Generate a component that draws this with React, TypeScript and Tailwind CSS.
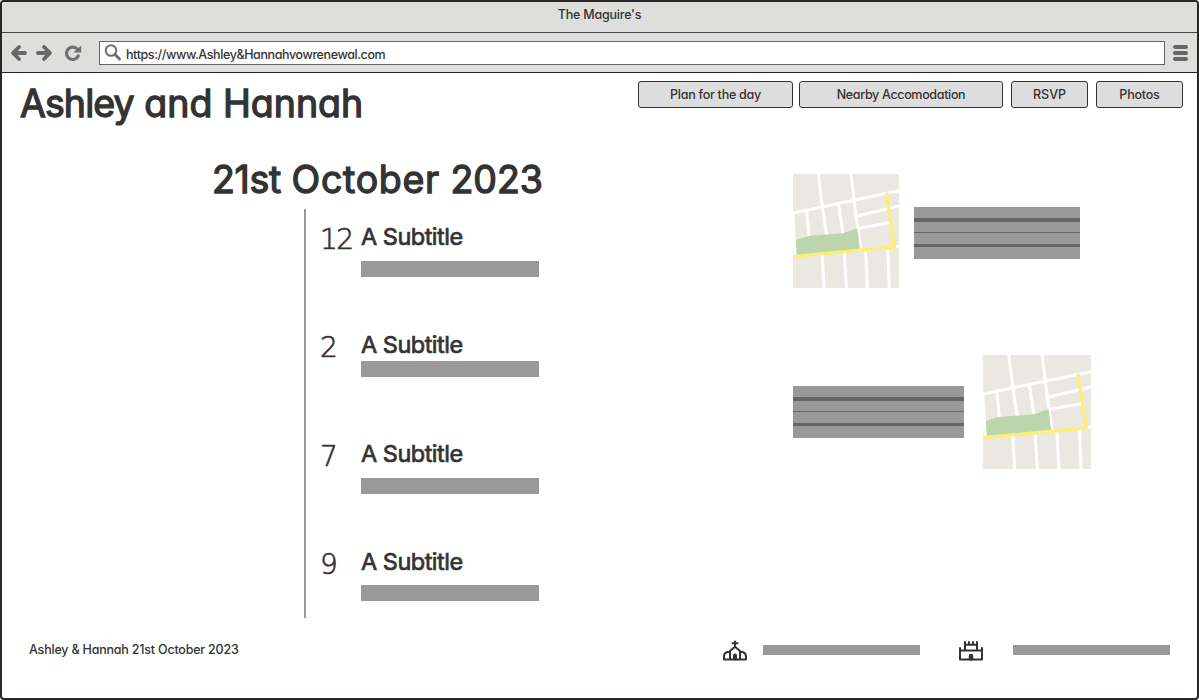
import type { ReactNode } from 'react';

const ink = "font-[Inter,sans-serif] text-[#333] whitespace-nowrap [font-feature-settings:'cv11'] ";
const small = 'text-[12.5px] font-medium ';
const big = 'text-[37.5px] font-normal [-webkit-text-stroke:1.3px_#333] [stroke-linejoin:round] ';

function Text({ className, children }: { className: string; children: ReactNode }) {
  return <span className={ink + className}>{children}</span>;
}

function StreetMap({ className }: { className: string }) {
  return (
    <svg className={className} viewBox="0 0 318 342" preserveAspectRatio="none">
      <rect width="318" height="342" fill="#ebe8e1" />
      <g fill="none" stroke="#fff" strokeWidth="9">
        <path d="M0 117 318 50" />
        <path d="M76 0 88 98 101 185" />
        <path d="M174 0 190 135 204 228" />
        <path d="M41 110 48 187" />
        <path d="M137 93 150 180" />
        <path d="M-1 118 7 248" />
        <path d="M193 126 318 96" />
        <path d="M197 163 290 146" />
        <path d="M88 242 93 342" />
        <path d="M154 238 160 342" />
        <path d="M218 232 223 342" />
        <path d="M284 226 289 342" />
        <path d="M300 220 318 217" />
      </g>
      <path d="M9 198 45 186 150 178 193 163 201 226 11 243Z" fill="#bcd5ac" />
      <path d="M0 248 304 219 280 56" fill="none" stroke="#fcef76" strokeWidth="10" />
    </svg>
  );
}

function Lines({ className }: { className: string }) {
  return (
    <div className={'flex h-[52px] flex-col bg-[#999] ' + className}>
      <div className="mt-[11px] h-1 bg-[#666]" />
      <div className="mt-[10px] h-px bg-[#666]" />
      <div className="mt-[11px] h-[3px] bg-[#666]" />
    </div>
  );
}

function NavButton({ className, label, text }: { className: string; label: string; text: string }) {
  return (
    <button className={'flex h-[27px] items-center justify-center rounded-[3px] border border-[#333] bg-[#ddd] ' + className}>
      <Text className={small + 'pt-[2px] ' + text}>{label}</Text>
    </button>
  );
}

function Event({ hour, bar }: { hour: string; bar: string }) {
  return (
    <div className="flex h-[108.3px]">
      <div className="w-[41px] pt-[14px]">
        <span className="block font-['DejaVu_Sans',sans-serif] text-[28px] leading-[34px] font-extralight tracking-[-1.6px] text-[#333] [-webkit-text-stroke:0.7px_#333]">
          {hour}
        </span>
      </div>
      <div className="flex flex-col">
        <Text className="h-[39px] pt-[11px] text-[23.5px] leading-[33px] font-normal tracking-[-0.5px] [-webkit-text-stroke:0.7px_#333]">
          A Subtitle
        </Text>
        <div className={'h-4 w-[178px] bg-[#999] ' + bar} />
      </div>
    </div>
  );
}

export default function App() {
  return (
    <div className="flex h-[700px] w-[1199px] flex-col overflow-hidden rounded-[4px] border-2 border-[#2a2626] bg-white">
      <div className="flex h-[31px] justify-center border-b border-[#444] bg-[#dededd]">
        <Text className={small + 'pt-[4px] leading-[18px] tracking-[-0.2px]'}>The Maguire's</Text>
      </div>
      <div className="flex h-[40px] shrink-0 items-center border-b border-[#222] bg-[#dededd]">
        <svg className="ml-[8px] h-[18px] w-[18px]" viewBox="0 0 18 18" fill="none" stroke="#666" strokeWidth="3.8" strokeLinecap="round" strokeLinejoin="round">
          <path d="M15 9H4M9 3 3 9l6 6" />
        </svg>
        <svg className="ml-[7px] h-[18px] w-[18px]" viewBox="0 0 18 18" fill="none" stroke="#666" strokeWidth="3.8" strokeLinecap="round" strokeLinejoin="round">
          <path d="M3 9h11M9 3l6 6-6 6" />
        </svg>
        <svg className="ml-[11px] h-[18px] w-[18px]" viewBox="0 0 18 18">
          <path d="M14.300 12A6.200 6.200 0 1 1 12.800 4.600" fill="none" stroke="#707070" strokeWidth="3.2" strokeLinecap="round" />
          <path d="M17.200 1.500v7.100H9.300Z" fill="#707070" />
        </svg>
        <div className="ml-[17px] flex h-[24px] w-[1066px] items-center border border-[#666] bg-white">
          <svg className="ml-[4px] h-[18px] w-[18px]" viewBox="0 0 18 18" fill="none" stroke="#707070" strokeLinecap="round">
            <circle cx="7" cy="6.5" r="5.3" strokeWidth="2" />
            <path d="m11 10.500 4.500 4.500" strokeWidth="3" />
          </svg>
          <div className="ml-[4px] flex h-[22px] items-end">
            <Text className={small + 'leading-[18px] tracking-[-0.4px]'}>https://www.Ashley&amp;Hannahvowrenewal.com</Text>
          </div>
        </div>
        <div className="ml-[8px] flex w-[15px] flex-col gap-[2px]">
          <div className="h-1 rounded-[2px] bg-[#666]" />
          <div className="h-1 rounded-[2px] bg-[#666]" />
          <div className="h-1 rounded-[2px] bg-[#666]" />
        </div>
      </div>

      <header className="flex h-[83px] justify-between pt-[8px] pr-[14px] pl-[18px]">
        <h1 className="flex">
          <Text className={big + 'leading-[46px]'}>
            <span className="tracking-[-0.9px]">Ashley</span> and Hannah
          </Text>
        </h1>
        <nav className="flex">
          <NavButton className="w-[155px]" label="Plan for the day" text="tracking-[-0.25px]" />
          <NavButton className="ml-[6px] w-[204px]" label="Nearby Accomodation" text="tracking-[-0.33px]" />
          <NavButton className="ml-[8px] w-[77px]" label="RSVP" text="" />
          <NavButton className="ml-[8px] w-[87px]" label="Photos" text="tracking-[-0.2px]" />
        </nav>
      </header>

      <main className="flex h-[462px]">
        <section className="flex w-[791px] flex-col">
          <h2 className="flex h-[53px] pl-[210px]">
            <Text className={big + 'leading-[48px]'}>
              <span className="tracking-[-0.3px]">21st</span> <span className="tracking-[0.7px]">October</span>{' '}
              <span>2023</span>
            </Text>
          </h2>
          <div className="ml-[302px] h-[409px] border-l-2 border-[#999] pl-[14px]">
            <Event hour="12" bar="mt-[13px]" />
            <Event hour="2" bar="mt-[5px]" />
            <Event hour="7" bar="mt-[13px]" />
            <Event hour="9" bar="mt-[12px]" />
          </div>
        </section>
        <section className="flex flex-col gap-[67px] pt-[18px]">
          <div className="flex">
            <StreetMap className="h-[114px] w-[106px]" />
            <Lines className="mt-[33px] ml-[15px] w-[166px]" />
          </div>
          <div className="flex">
            <Lines className="mt-[31px] w-[171px]" />
            <StreetMap className="ml-[19px] h-[114px] w-[108px]" />
          </div>
        </section>
      </main>

      <footer className="flex h-[64px] items-center pl-[27px]">
        <div className="flex w-[693px]">
          <Text className={small + 'tracking-[-0.2px]'}>Ashley &amp; Hannah 21st October 2023</Text>
        </div>
        <svg className="h-[24px] w-[26px]" viewBox="0 0 26 24" fill="none" stroke="#333" strokeWidth="2" strokeLinecap="round" strokeLinejoin="round">
          <path d="M13 3.500v5.500M10.500 5.300h5" />
          <path d="M8 21v-8l5-4.300 5 4.300v8" />
          <path d="M7.500 14H5.500Q2 15 2 18.500v3h22v-3q0-3.500-3.500-4.500h-2" />
          <path d="M13 20.500v-3" strokeWidth="4" />
        </svg>
        <div className="ml-[15px] h-[10px] w-[157px] bg-[#999]" />
        <svg className="ml-[38px] h-[24px] w-[26px]" viewBox="0 0 26 24" fill="none" stroke="#333" strokeWidth="2" strokeLinecap="round" strokeLinejoin="round">
          <path d="M2 10v11.500h22V10M2 12.500h22" />
          <path d="M7 12V4M19 12V4M7 6.800h12M11 6.500V4M15 6.500V4" />
          <path d="M13 20.500v-2.500" strokeWidth="4.5" />
        </svg>
        <div className="ml-[29px] h-[10px] w-[157px] bg-[#999]" />
      </footer>
    </div>
  );
}
